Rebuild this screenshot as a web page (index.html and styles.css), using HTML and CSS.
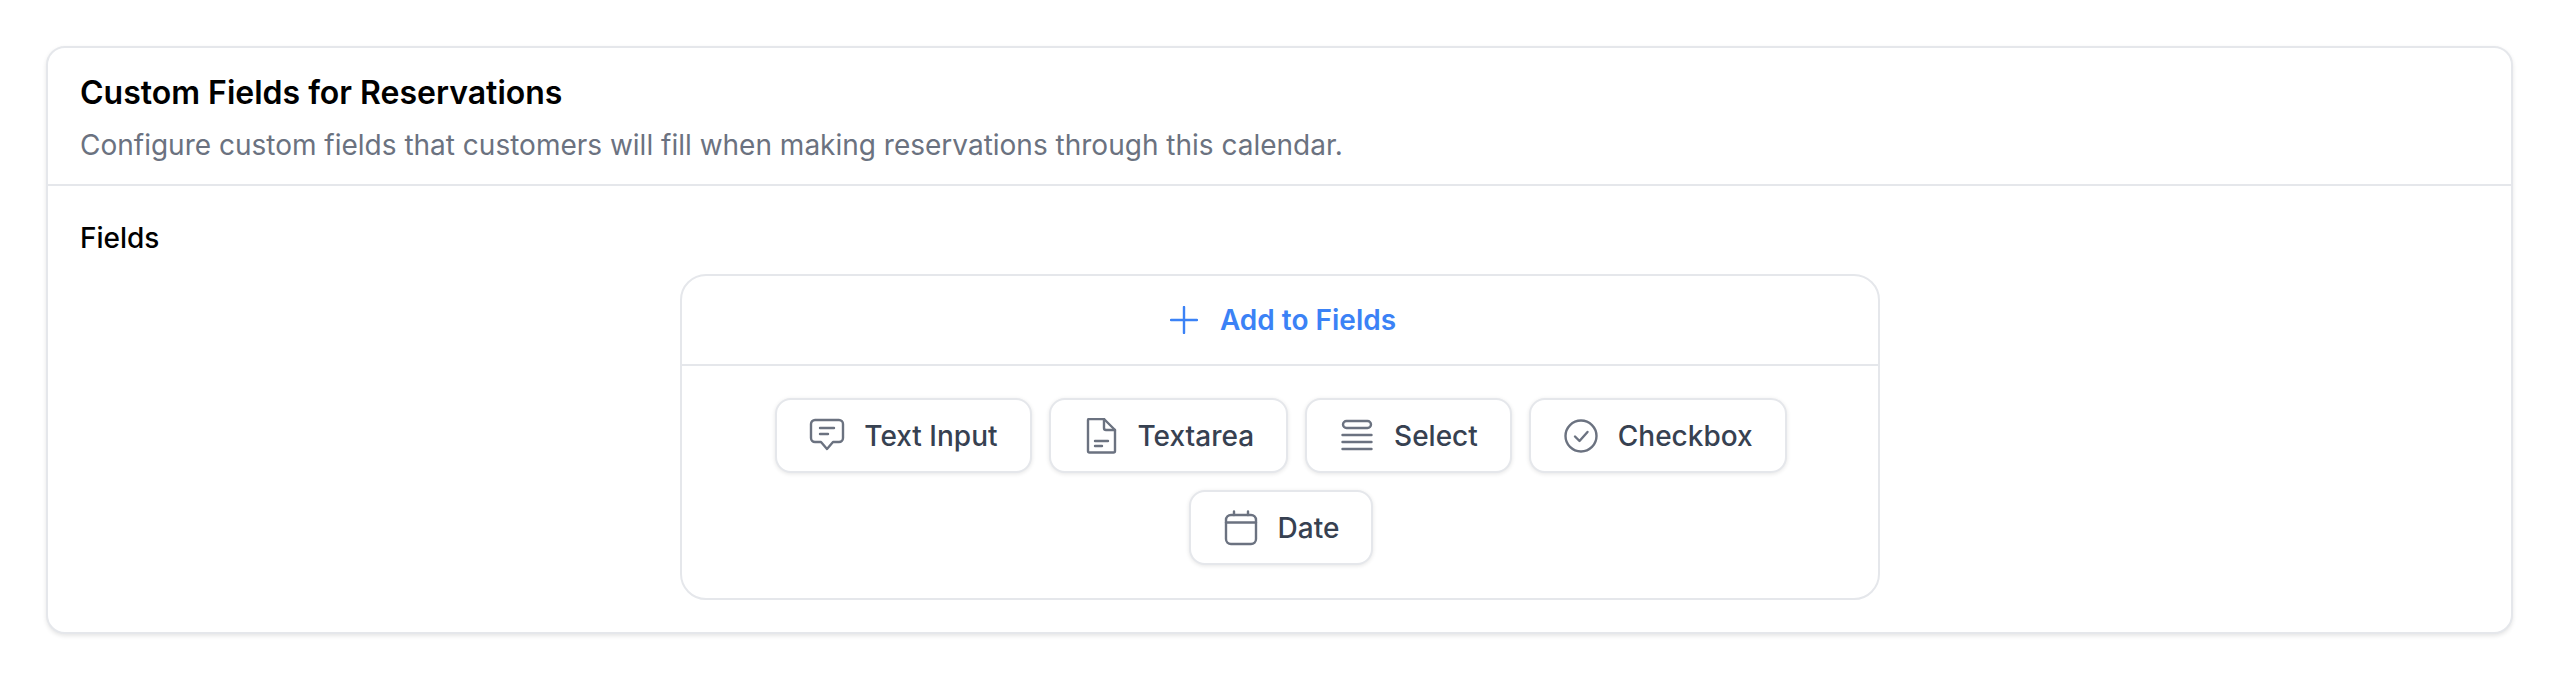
FILE: index.html

```html
<!DOCTYPE html>
<html lang="en">
<head>
  <meta charset="UTF-8">
  <title>Custom Fields for Reservations</title>
  <link rel="stylesheet" href="styles.css">
</head>
<body>
  <div class="card">
    <div class="card-header">
      <h1>Custom Fields for Reservations</h1>
      <p>Configure custom fields that customers will fill when making reservations through this calendar.</p>
    </div>
    <div class="card-body">
      <div class="field-label">Fields</div>
      <div class="builder">
        <div class="builder-add">
          <svg class="icon-plus" viewBox="0 0 28 28" fill="none" stroke="currentColor" stroke-width="2.4" stroke-linecap="round">
            <path d="M14 1v26M1 14h26"/>
          </svg>
          <span>Add to Fields</span>
        </div>
        <div class="builder-types">
          <div class="chip">
            <svg class="icon" viewBox="0 0 36 36" fill="none" stroke="currentColor" stroke-width="2.4" stroke-linecap="round" stroke-linejoin="round">
              <path d="M6 2h24a4 4 0 0 1 4 4v14a4 4 0 0 1-4 4h-6l-6 7-6-7H6a4 4 0 0 1-4-4V6a4 4 0 0 1 4-4z"/>
              <path d="M11 10h14M11 16h8"/>
            </svg>
            <span>Text Input</span>
          </div>
          <div class="chip">
            <svg class="icon" viewBox="0 0 36 36" fill="none" stroke="currentColor" stroke-width="2.4" stroke-linecap="round" stroke-linejoin="round">
              <path d="M6 1h15l11 11v21a1.500 1.500 0 0 1-1.500 1.500h-24A1.500 1.500 0 0 1 5 33V2a1 1 0 0 1 1-1z"/>
              <path d="M21 1v9a2 2 0 0 0 2 2h9"/>
              <path d="M12 23h13M12 28h7"/>
            </svg>
            <span>Textarea</span>
          </div>
          <div class="chip">
            <svg class="icon" viewBox="0 0 36 36" fill="none" stroke="currentColor" stroke-width="2.4" stroke-linecap="round" stroke-linejoin="round">
              <rect x="4" y="3" width="28" height="7" rx="3.5"/>
              <path d="M3.500 17h29M3.500 24h29M3.500 31h29"/>
            </svg>
            <span>Select</span>
          </div>
          <div class="chip">
            <svg class="icon" viewBox="0 0 36 36" fill="none" stroke="currentColor" stroke-width="2.4" stroke-linecap="round" stroke-linejoin="round">
              <circle cx="18" cy="18" r="15.5"/>
              <path d="M12 18.500l4.500 4.500 8-9"/>
            </svg>
            <span>Checkbox</span>
          </div>
          <div class="chip">
            <svg class="icon" viewBox="0 0 36 36" fill="none" stroke="currentColor" stroke-width="2.4" stroke-linecap="round" stroke-linejoin="round">
              <rect x="3" y="5" width="30" height="29" rx="5"/>
              <path d="M3 12.500h30M11 1.500V5M25 1.500V5"/>
            </svg>
            <span>Date</span>
          </div>
        </div>
      </div>
    </div>
  </div>
</body>
</html>
```

FILE: styles.css

```css
* {
  box-sizing: border-box;
}
body {
  margin: 0;
  padding: 46px 47px 46px 46px;
  background: #fff;
  font-family: Inter, "Liberation Sans", sans-serif;
}
.card {
  height: 588px;
  background: #fff;
  border: 2px solid #e5e7eb;
  border-radius: 19px;
  box-shadow: 0 2px 4px rgba(0, 0, 0, 0.1);
}
.card-header {
  height: 138px;
  padding: 25px 32px 0;
  border-bottom: 2px solid #e5e7eb;
}
h1 {
  margin: 0;
  font-size: 32px;
  line-height: 40px;
  font-weight: 600;
  color: #000;
}
p {
  margin: 12px 0 0;
  font-size: 28px;
  line-height: 40px;
  color: #6b7280;
}
.card-body {
  padding: 35px 32px 0;
}
.field-label {
  font-size: 28px;
  line-height: 34px;
  font-weight: 500;
  color: #000;
}
.builder {
  width: 1200px;
  height: 326px;
  margin: 19px auto 0;
  border: 2px solid #e5e7eb;
  border-radius: 26px;
}
.builder-add {
  display: flex;
  align-items: center;
  justify-content: center;
  gap: 22px;
  height: 90px;
  padding-left: 7px;
  border-bottom: 2px solid #e5e7eb;
  color: #3b82f6;
  font-size: 28px;
  font-weight: 600;
}
.icon-plus {
  width: 28px;
  height: 28px;
}
.builder-types {
  display: flex;
  flex-wrap: wrap;
  justify-content: center;
  gap: 17px;
  padding: 32px 60px 0 63px;
}
.chip {
  display: flex;
  align-items: center;
  gap: 19px;
  height: 75px;
  padding: 0 32px;
  background: #fff;
  border: 2px solid #e5e7eb;
  border-radius: 16px;
  box-shadow: 0 1px 4px rgba(0, 0, 0, 0.1);
  color: #374151;
  font-size: 28px;
  font-weight: 500;
}
.icon {
  width: 36px;
  height: 36px;
  color: #6b7280;
}
```
